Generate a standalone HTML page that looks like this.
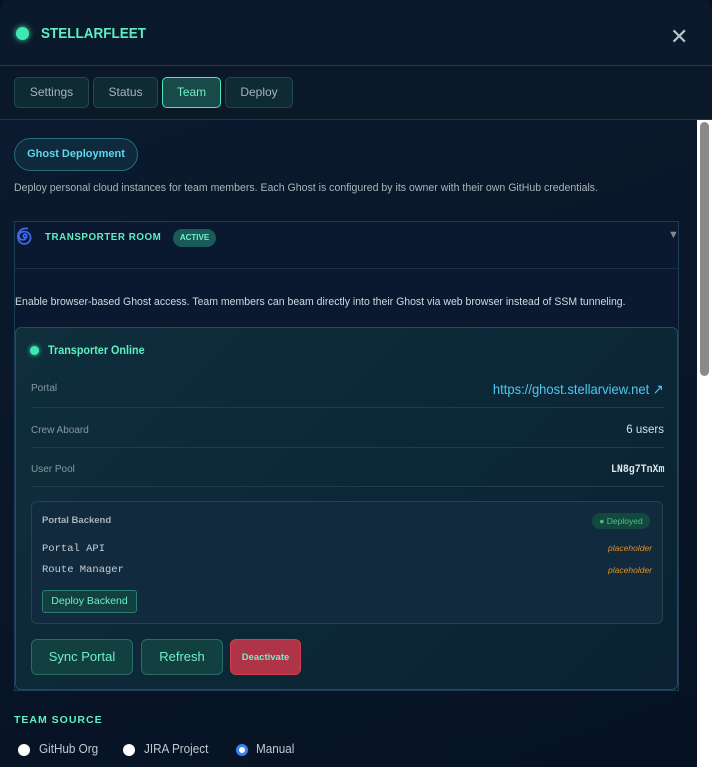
<!DOCTYPE html>
<html><head><style>
*{box-sizing:border-box;margin:0;padding:0}
body{width:712px;height:767px;overflow:hidden;background:#071221;font-family:"Liberation Sans",sans-serif;color:#c8d4dc;position:relative}
.hdr{position:absolute;left:0;top:0;width:712px;height:66px;background:#0a1a2c;border-bottom:1px solid #1c3a48;border-radius:10px 10px 0 0}
.dot{position:absolute;left:16px;top:27px;width:13px;height:13px;border-radius:50%;background:#3ee8b0;box-shadow:0 0 6px #3ee8b0}
.title{position:absolute;left:41px;top:25px;font-size:15px;font-weight:bold;color:#5ef0c0;transform:scaleX(.9);transform-origin:left}
.x{position:absolute;left:670px;top:24px;font-size:22px;color:#b8c4cc}
.tabs{position:absolute;left:0;top:66px;width:712px;height:54px;background:#0a1828;border-bottom:1px solid #1c3a48}
.tab{position:absolute;top:11px;height:31px;border:1px solid #1f4a50;border-radius:5px;background:#0e2a32;color:#a8b4bc;font-size:12px;text-align:center;line-height:29px}
.tab.on{border-color:#4ee8b8;background:#174a48;color:#6ef0c8}
.content{position:absolute;left:0;top:120px;width:697px;height:647px;background:linear-gradient(160deg,#0b1a2e,#061222)}
.sb{position:absolute;left:697px;top:120px;width:15px;height:647px;background:#fff}
.thumb{position:absolute;left:700px;top:122px;width:9px;height:254px;border-radius:5px;background:#8a8a8a}
.pill{position:absolute;left:14px;top:138px;width:124px;height:33px;border:1px solid #2a6a80;border-radius:17px;background:#0f2a3c;color:#5cd8f0;font-size:11px;font-weight:bold;text-align:center;line-height:31px}
.t{position:absolute;white-space:nowrap}
.n{transform:scaleX(.9);transform-origin:left}
.acc{position:absolute;left:14px;top:221px;width:665px;height:470px;border:1px solid #1e3c58;background:#0a1830}
.card{position:absolute;left:15px;top:327px;width:663px;height:363px;border:1px solid #1e5058;border-radius:6px;background:linear-gradient(135deg,#0f2e3c,#0a2232)}
.line{position:absolute;left:31px;width:633px;height:1px;background:#1c4048}
.be{position:absolute;left:31px;top:501px;width:632px;height:123px;border:1px solid #224450;border-radius:6px;background:#112a3e}
.btn{position:absolute;top:639px;height:36px;border:1px solid #2a6a68;border-radius:6px;background:#124040;color:#6ef0c8;font-size:13px;text-align:center;line-height:34px}
.radio{position:absolute;top:744px;width:12px;height:12px;border-radius:50%;background:#fff}
</style></head><body>
<div class="hdr"><div class="dot"></div><div class="title">STELLARFLEET</div><div class="x">✕</div></div>
<div class="tabs">
<div class="tab" style="left:14px;width:75px">Settings</div>
<div class="tab" style="left:93px;width:65px">Status</div>
<div class="tab on" style="left:162px;width:59px">Team</div>
<div class="tab" style="left:225px;width:68px">Deploy</div>
</div>
<div class="content"></div>
<div class="sb"></div><div class="thumb"></div>
<div class="pill">Ghost Deployment</div>
<div class="t n" style="left:14px;top:182px;font-size:11px;color:#a8b4bc;transform:scaleX(.96)">Deploy personal cloud instances for team members. Each Ghost is configured by its owner with their own GitHub credentials.</div>
<div class="acc"></div>
<svg style="position:absolute;left:16px;top:226px" width="18" height="22" viewBox="0 0 16 19"><path d="M8 10 a1.5 1.5 0 1 1 1.5-1.5 a3.5 3.5 0 1 1-4-3.5 a5.5 5.5 0 1 1-3.5 6 a7 7 0 0 1 8-9" fill="none" stroke="#3a6af0" stroke-width="1.6" stroke-linecap="round"/></svg>
<div class="t" style="left:45px;top:231px;font-size:10.5px;font-weight:bold;color:#5ef0c0;letter-spacing:.6px;transform:scaleX(.93);transform-origin:left">TRANSPORTER ROOM</div>
<div class="t" style="left:173px;top:229px;width:43px;height:18px;border-radius:9px;background:#1a5a58;color:#6ef0c8;font-size:8px;font-weight:bold;text-align:center;line-height:18px">ACTIVE</div>
<div class="t" style="left:668px;top:229px;font-size:11px;color:#888">▼</div>
<div style="position:absolute;left:15px;top:268px;width:663px;height:1px;background:#1a3048"></div>
<div class="t n" style="left:15px;top:296px;font-size:11px;color:#d0dae0;transform:scaleX(.955)">Enable browser-based Ghost access. Team members can beam directly into their Ghost via web browser instead of SSM tunneling.</div>
<div class="card"></div>
<div style="position:absolute;left:30px;top:346px;width:9px;height:9px;border-radius:50%;background:#3ee8b0;box-shadow:0 0 5px #3ee8b0"></div>
<div class="t n" style="left:48px;top:343px;font-size:12px;font-weight:bold;color:#5ef0c0">Transporter Online</div>
<div class="t" style="left:31px;top:383px;font-size:10px;color:#8898a0">Portal</div>
<div class="t" style="right:48px;top:381px;font-size:14px;color:#50c8f0;transform:scaleX(.93);transform-origin:right">https://ghost.stellarview.net ↗</div>
<div class="line" style="top:407px"></div>
<div class="t" style="left:31px;top:425px;font-size:10px;color:#8898a0">Crew Aboard</div>
<div class="t" style="right:48px;top:424px;font-size:11.5px;color:#d8e0e4">6 users</div>
<div class="line" style="top:447px"></div>
<div class="t" style="left:31px;top:464px;font-size:10px;color:#8898a0">User Pool</div>
<div class="t" style="right:48px;top:464px;font-size:11px;color:#e0e6ea;font-family:'Liberation Mono',monospace;font-weight:bold;transform:scaleX(.9);transform-origin:right">LN8g7TnXm</div>
<div class="line" style="top:486px"></div>
<div class="be"></div>
<div class="t" style="left:42px;top:515px;font-size:9.5px;font-weight:bold;color:#a8b4bc">Portal Backend</div>
<div class="t" style="left:592px;top:513px;width:58px;height:16px;border-radius:8px;background:#13483e;color:#40c880;font-size:8.5px;text-align:center;line-height:16px">● Deployed</div>
<div class="t" style="left:42px;top:543px;font-size:10.5px;color:#c8d0d4;font-family:'Liberation Mono',monospace">Portal API</div>
<div class="t" style="right:60px;top:543px;font-size:8.5px;color:#e09020;font-style:italic">placeholder</div>
<div class="t" style="left:42px;top:564px;font-size:10.5px;color:#c8d0d4;font-family:'Liberation Mono',monospace">Route Manager</div>
<div class="t" style="right:60px;top:565px;font-size:8.5px;color:#e09020;font-style:italic">placeholder</div>
<div class="t" style="left:42px;top:590px;width:95px;height:23px;border:1px solid #2a8070;border-radius:3px;background:#124040;color:#6ef0c8;font-size:10.5px;text-align:center;line-height:21px">Deploy Backend</div>
<div class="btn" style="left:31px;width:102px">Sync Portal</div>
<div class="btn" style="left:141px;width:82px">Refresh</div>
<div class="btn" style="left:230px;width:71px;background:#b03448;border-color:#d04050;font-size:9.5px;font-weight:bold;line-height:36px">Deactivate</div>
<div class="t" style="left:14px;top:714px;font-size:10.5px;font-weight:bold;color:#5ef0c0;letter-spacing:1px">TEAM SOURCE</div>
<div class="radio" style="left:18px"></div>
<div class="t n" style="left:39px;top:741px;font-size:13px;color:#c0cad0">GitHub Org</div>
<div class="radio" style="left:123px"></div>
<div class="t n" style="left:144px;top:741px;font-size:13px;color:#c0cad0">JIRA Project</div>
<div class="radio" style="left:236px;border:3px solid #3a80f0;background:#fff"></div>
<div class="t n" style="left:256px;top:741px;font-size:13px;color:#c0cad0">Manual</div>
</body></html>
